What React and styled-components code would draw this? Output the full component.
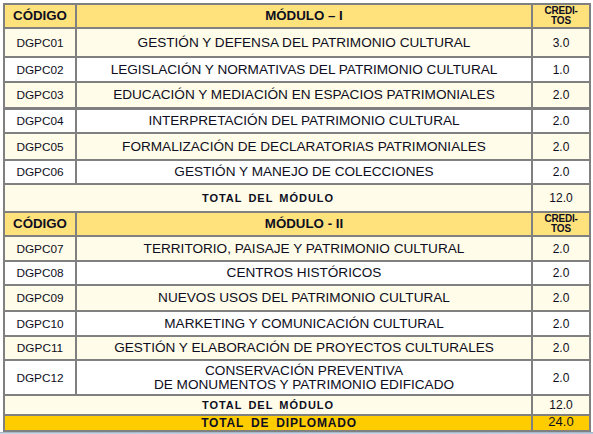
import React from 'react'
import styled, { createGlobalStyle } from 'styled-components'

const GlobalStyle = createGlobalStyle`
  body {
    margin: 0;
    background: #ffffff;
    font-family: "Liberation Sans", Arial, sans-serif;
  }
`;

const Page = styled.div`
  width: 593px;
  height: 434px;
  overflow: hidden;
  background: #ffffff;
  display: flex;
  flex-direction: column;
`;

const Holder = styled.div`
  padding: 3px 0 0 3px;
`;

const Footer = styled.div`
  flex: 1;
  border-top: 1px solid #a9b7c6;
  background: linear-gradient(90deg, #c9d7e4 0%, #b9cde0 35%, #c6d6e6 60%, #b8cbdd 100%);
`;

const Table = styled.table`
  border-collapse: collapse;
  table-layout: fixed;
  width: 588px;
  color: #0e0e22;
  font-family: "Liberation Sans", Arial, sans-serif;

  td {
    border: 2px solid #808080;
    padding: 0;
    text-align: center;
    vertical-align: middle;
    overflow: hidden;
  }
`;

const Row = styled.tr`
  height: ${p => p.$h}px;
  background: ${p => p.$bg || '#ffffff'};

  td {
    ${p => p.$thick ? 'border-bottom-width: 3px;' : ''}
  }
`;

const Head = styled.td`
  background: #ffe27c;
  font-weight: 700;
  font-size: 13.3px;
  line-height: 14px;
`;

const CreditHead = styled.td`
  background: #ffe27c;
  font-weight: 700;
  font-size: 10px;
  line-height: 10px;
  letter-spacing: -0.2px;
`;

const Code = styled.td`
  font-size: 11.8px;
`;

const Module = styled.td`
  font-size: 13.6px;
  line-height: 14px;
`;

const Credit = styled.td`
  font-size: 12px;
`;

const TotalLabel = styled.td`
  font-weight: 700;
  font-size: 11px;
  letter-spacing: 1px;
  word-spacing: 2px;
  line-height: 12px;
`;

const GrandLabel = styled.td`
  font-weight: 700;
  font-size: 12px;
  letter-spacing: 0.8px;
  word-spacing: 3px;
  line-height: 12px;
  padding-left: 22px !important;
`;

const GrandCredit = styled.td`
  font-size: 13px;
  line-height: 12px;
  vertical-align: top !important;
`;

const CREAM = '#fffce9';
const GOLD = '#ffcc00';

const moduleOne = [
  ['DGPC01', 'GESTIÓN Y DEFENSA DEL PATRIMONIO CULTURAL', '3.0', 29],
  ['DGPC02', 'LEGISLACIÓN Y NORMATIVAS DEL PATRIMONIO CULTURAL', '1.0', 25],
  ['DGPC03', 'EDUCACIÓN Y MEDIACIÓN EN ESPACIOS PATRIMONIALES', '2.0', 26],
  ['DGPC04', 'INTERPRETACIÓN DEL PATRIMONIO CULTURAL', '2.0', 25],
  ['DGPC05', 'FORMALIZACIÓN DE DECLARATORIAS PATRIMONIALES', '2.0', 27],
  ['DGPC06', 'GESTIÓN Y MANEJO DE COLECCIONES', '2.0', 24],
];

const moduleTwo = [
  ['DGPC07', 'TERRITORIO, PAISAJE Y PATRIMONIO CULTURAL', '2.0', 25],
  ['DGPC08', 'CENTROS HISTÓRICOS', '2.0', 24],
  ['DGPC09', 'NUEVOS USOS DEL PATRIMONIO CULTURAL', '2.0', 26],
  ['DGPC10', 'MARKETING Y COMUNICACIÓN CULTURAL', '2.0', 25],
  ['DGPC11', 'GESTIÓN Y ELABORACIÓN DE PROYECTOS CULTURALES', '2.0', 24],
  ['DGPC12', ['CONSERVACIÓN PREVENTIVA', 'DE MONUMENTOS Y PATRIMONIO EDIFICADO'], '2.0', 35],
];

const HeaderRow = ({ title }) => (
  <Row $h={24}>
    <Head>CÓDIGO</Head>
    <Head>{title}</Head>
    <CreditHead>CREDI-<br />TOS</CreditHead>
  </Row>
);

const CourseRows = ({ items }) =>
  items.map(([code, name, credits, h], i) => (
    <Row key={code} $h={h} $bg={i % 2 === 0 ? CREAM : '#ffffff'} $thick={code === 'DGPC03'}>
      <Code>{code}</Code>
      <Module>
        {Array.isArray(name) ? name.map((line, j) => <div key={j}>{line}</div>) : name}
      </Module>
      <Credit>{credits}</Credit>
    </Row>
  ));

export default function App() {
  return (
    <Page>
      <GlobalStyle />
      <Holder>
        <Table>
          <colgroup>
            <col style={{ width: 72 }} />
            <col style={{ width: 456 }} />
            <col style={{ width: 58 }} />
          </colgroup>
          <tbody>
            <HeaderRow title="MÓDULO – I" />
            <CourseRows items={moduleOne} />
            <Row $h={28} $bg={CREAM}>
              <TotalLabel colSpan={2}>TOTAL DEL MÓDULO</TotalLabel>
              <Credit>12.0</Credit>
            </Row>
            <HeaderRow title="MÓDULO - II" />
            <CourseRows items={moduleTwo} />
            <Row $h={20} $bg={CREAM}>
              <TotalLabel colSpan={2}>TOTAL DEL MÓDULO</TotalLabel>
              <Credit>12.0</Credit>
            </Row>
            <Row $h={16} $bg={GOLD}>
              <GrandLabel colSpan={2}>TOTAL DE DIPLOMADO</GrandLabel>
              <GrandCredit>24.0</GrandCredit>
            </Row>
          </tbody>
        </Table>
      </Holder>
      <Footer />
    </Page>
  )
}
